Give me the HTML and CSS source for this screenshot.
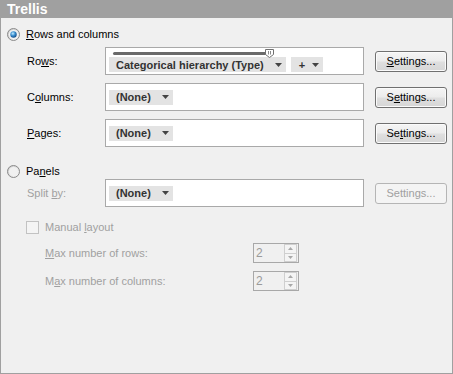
FILE: index.html
```html
<!DOCTYPE html>
<html>
<head>
<meta charset="utf-8">
<link rel="stylesheet" href="styles.css">
</head>
<body>
<svg class="defs" width="0" height="0" aria-hidden="true">
  <defs>
    <linearGradient id="rg" x1="0" y1="0" x2="1" y2="1">
      <stop offset="0" stop-color="#c9c9c9"/>
      <stop offset="1" stop-color="#fbfbfb"/>
    </linearGradient>
    <radialGradient id="rb" cx="0.4" cy="0.35" r="0.75">
      <stop offset="0" stop-color="#c4ecff"/>
      <stop offset="0.45" stop-color="#3a8fd0"/>
      <stop offset="1" stop-color="#0b3a74"/>
    </radialGradient>
  </defs>
</svg>
<div class="panel">
  <div class="title">Trellis</div>
  <div class="content">
    <div class="radio-row first">
      <svg class="radio" width="13" height="13" viewBox="0 0 13 13"><circle cx="6.5" cy="6.5" r="6" fill="url(#rg)" stroke="#8a8a8a"/><circle cx="6.5" cy="6.5" r="4.5" fill="#f4f4f4"/><circle cx="6.5" cy="6.5" r="3.2" fill="url(#rb)"/></svg>
      <span><u>R</u>ows and columns</span>
    </div>

    <div class="field rows-field">
      <span class="label">Ro<u>w</u>s:</span>
      <div class="box rows-box">
        <div class="slider">
          <span class="track"></span>
          <svg class="thumb" width="9" height="9" viewBox="0 0 9 9"><path d="M0.5 0.5h8v5l-4 3l-4-3z" fill="#fff" stroke="#707070"/><path d="M3.5 2v3.5M5.5 2v3.5" stroke="#8a8a8a"/></svg>
        </div>
        <div class="chips">
          <span class="chip">Categorical hierarchy (Type)<svg class="arrow" width="7" height="4" viewBox="0 0 7 4"><path d="M0 0h7L3.5 4z" fill="#444"/></svg></span>
          <span class="chip plus">+<svg class="arrow" width="7" height="4" viewBox="0 0 7 4"><path d="M0 0h7L3.5 4z" fill="#444"/></svg></span>
        </div>
      </div>
      <button class="btn"><u>S</u>ettings...</button>
    </div>

    <div class="field gap8">
      <span class="label">C<u>o</u>lumns:</span>
      <div class="box">
        <span class="chip">(None)<svg class="arrow" width="7" height="4" viewBox="0 0 7 4"><path d="M0 0h7L3.5 4z" fill="#444"/></svg></span>
      </div>
      <button class="btn">S<u>e</u>ttings...</button>
    </div>

    <div class="field gap8">
      <span class="label"><u>P</u>ages:</span>
      <div class="box">
        <span class="chip">(None)<svg class="arrow" width="7" height="4" viewBox="0 0 7 4"><path d="M0 0h7L3.5 4z" fill="#444"/></svg></span>
      </div>
      <button class="btn">Se<u>t</u>tings...</button>
    </div>

    <div class="radio-row panels">
      <svg class="radio" width="13" height="13" viewBox="0 0 13 13"><circle cx="6.5" cy="6.5" r="6" fill="url(#rg)" stroke="#8a8a8a"/><circle cx="6.5" cy="6.5" r="4.5" fill="#f1f1f1"/></svg>
      <span>Pa<u>n</u>els</span>
    </div>

    <div class="field split">
      <span class="label disabled">Split <u>b</u>y:</span>
      <div class="box">
        <span class="chip">(None)<svg class="arrow" width="7" height="4" viewBox="0 0 7 4"><path d="M0 0h7L3.5 4z" fill="#444"/></svg></span>
      </div>
      <button class="btn btn-disabled" disabled>Settin<u>g</u>s...</button>
    </div>

    <div class="check-row">
      <span class="checkbox"></span>
      <span class="disabled">Manual <u>l</u>ayout</span>
    </div>

    <div class="spin-row first-spin">
      <span class="spin-label disabled"><u>M</u>ax number of rows:</span>
      <div class="spin">
        <span class="spin-val">2</span>
        <div class="spin-btns">
          <span class="sb"><svg width="5" height="3" viewBox="0 0 5 3"><path d="M0 3h5L2.5 0z" fill="#a8a8a8"/></svg></span>
          <span class="sb"><svg width="5" height="3" viewBox="0 0 5 3"><path d="M0 0h5L2.5 3z" fill="#a8a8a8"/></svg></span>
        </div>
      </div>
    </div>

    <div class="spin-row">
      <span class="spin-label disabled">M<u>a</u>x number of columns:</span>
      <div class="spin">
        <span class="spin-val">2</span>
        <div class="spin-btns">
          <span class="sb"><svg width="5" height="3" viewBox="0 0 5 3"><path d="M0 3h5L2.5 0z" fill="#a8a8a8"/></svg></span>
          <span class="sb"><svg width="5" height="3" viewBox="0 0 5 3"><path d="M0 0h5L2.5 3z" fill="#a8a8a8"/></svg></span>
        </div>
      </div>
    </div>
  </div>
</div>
</body>
</html>
```

FILE: styles.css
```css
* { box-sizing: border-box; }
html, body { margin: 0; padding: 0; }
body {
  width: 453px;
  height: 374px;
  font-family: "Liberation Sans", Arial, sans-serif;
  font-size: 11px;
  color: #000;
  background: #f0f0f0;
  overflow: hidden;
}
.defs { position: absolute; width: 0; height: 0; }
u { text-decoration: underline; text-underline-offset: 1px; }

.panel {
  width: 453px;
  height: 374px;
  border: 1px solid #a0a0a0;
  border-top: 0;
  background: #f0f0f0;
  display: flex;
  flex-direction: column;
}
.title {
  height: 18px;
  line-height: 18px;
  background: #a0a0a0;
  color: #fff;
  font-weight: bold;
  font-size: 14px;
  padding-left: 6px;
  margin: 0 -1px;
  padding-left: 7px;
}
.content {
  display: flex;
  flex-direction: column;
  padding-left: 6px;
}

.radio-row {
  display: flex;
  align-items: center;
  height: 14px;
  gap: 6px;
}
.radio-row.first { margin-top: 9px; }
.radio-row.panels { margin-top: 17px; }
.radio { display: block; flex: none; }

.field {
  display: flex;
  align-items: center;
  padding-left: 20px;
}
.rows-field { margin-top: 6px; }
.gap8 { margin-top: 8px; }
.split { margin-top: 1px; }

.label { width: 78px; flex: none; }
.disabled { color: #a0a0a0; }

.box {
  width: 259px;
  height: 28px;
  border: 1px solid #a9a9a9;
  background: #fff;
  display: flex;
  align-items: center;
  padding-left: 3px;
  flex: none;
}
.rows-box {
  flex-direction: column;
  align-items: flex-start;
  padding-left: 0;
}
.slider {
  position: relative;
  width: 257px;
  height: 8px;
  margin-top: 1px;
  flex: none;
}
.track {
  position: absolute;
  left: 7px;
  top: 3px;
  width: 155px;
  height: 3px;
  background: #6a6a6a;
  border-radius: 2px;
}
.thumb {
  position: absolute;
  left: 159px;
  top: 0;
  display: block;
}
.chips {
  display: flex;
  gap: 5px;
  margin-left: 3px;
}
.chip {
  display: inline-flex;
  align-items: center;
  height: 15px;
  background: #e3e3e3;
  color: #333;
  font-weight: bold;
  padding: 0 4px 0 7px;
  gap: 11px;
  white-space: nowrap;
}
.chip.plus { gap: 7px; padding-left: 8px; }
.arrow { display: block; flex: none; }

.btn {
  margin-left: 11px;
  width: 72px;
  height: 21px;
  padding: 0;
  border: 1px solid #707070;
  border-radius: 3px;
  background: linear-gradient(#f5f5f5 0%, #ececec 48%, #dfdfdf 52%, #d6d6d6 100%);
  box-shadow: inset 0 0 0 1px #fbfbfb;
  font-family: "Liberation Sans", Arial, sans-serif;
  font-size: 11px;
  color: #000;
  text-align: center;
  flex: none;
}
.btn-disabled {
  border-color: #b5b5b5;
  background: #f4f4f4;
  box-shadow: none;
  color: #a0a0a0;
}

.check-row {
  display: flex;
  align-items: center;
  height: 14px;
  margin-top: 13px;
  padding-left: 19px;
  gap: 6px;
}
.checkbox {
  width: 13px;
  height: 13px;
  border: 1px solid #c2c2c2;
  background: #f4f4f4;
  flex: none;
}

.spin-row {
  display: flex;
  align-items: center;
  padding-left: 38px;
  margin-top: 8px;
}
.spin-row.first-spin { margin-top: 9px; }
.spin-label { width: 208px; flex: none; }
.spin {
  width: 46px;
  height: 20px;
  border: 1px solid #a8a8a8;
  background: #f0f0f0;
  display: flex;
  align-items: stretch;
  flex: none;
}
.spin-val {
  flex: 1;
  color: #9a9a9a;
  font-size: 12px;
  line-height: 18px;
  padding-left: 2px;
}
.spin-btns {
  width: 13px;
  margin-right: 1px;
  display: flex;
  flex-direction: column;
}
.sb {
  flex: 1;
  border: 1px solid #cfcfcf;
  background: #f4f4f4;
  display: flex;
  align-items: center;
  justify-content: center;
}
.sb + .sb { border-top: 0; }
.sb svg { display: block; }
```
